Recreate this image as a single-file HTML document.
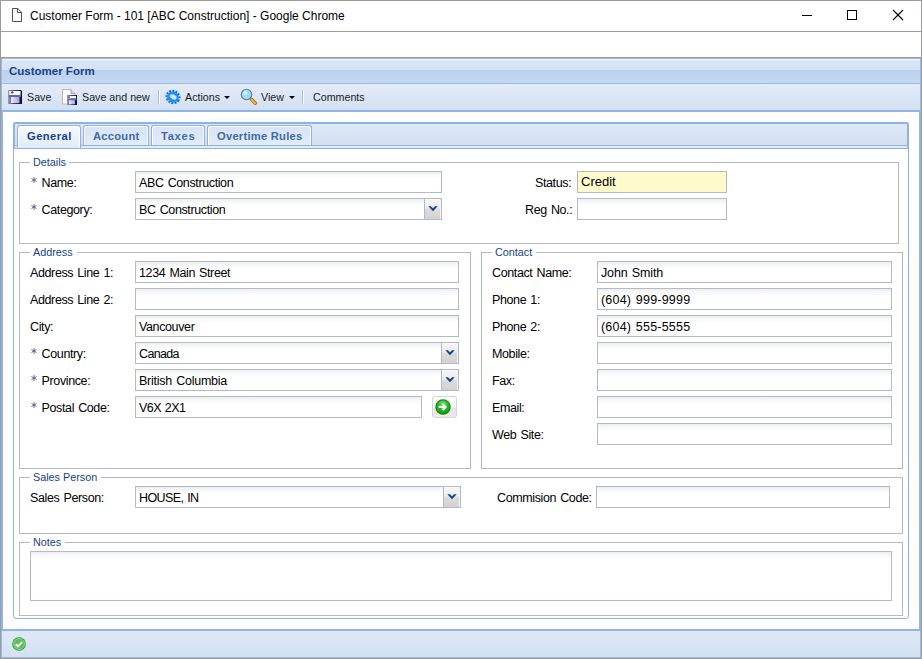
<!DOCTYPE html>
<html><head><meta charset="utf-8">
<style>
*{box-sizing:border-box;margin:0;padding:0}
html,body{width:922px;height:659px;overflow:hidden;background:#fff;font-family:"Liberation Sans",sans-serif;color:#000}
.a{position:absolute}
.t{position:absolute;white-space:pre;line-height:1}
#frame{left:0;top:0;width:922px;height:659px;border:1px solid #9d9a97}
#titlebar{left:1px;top:1px;width:920px;height:31px;background:#fff;border-bottom:1px solid #9c9c9c}
#addr{left:1px;top:32px;width:920px;height:26px;background:#fff;border-bottom:1px solid #9c9c9c}
#hdr{left:1px;top:58px;width:920px;height:26px;border:1px solid #99bbe8;border-bottom:0;background:linear-gradient(#f5f9fe 0,#f5f9fe 1px,#dae7f6 1px,#d3e2f4 11px,#b8ceee 11px,#bdd2ef 12px,#c4d8f1 24px)}
#tb{left:1px;top:83px;width:920px;height:27px;border:1px solid #99bbe8;border-bottom:0;background:linear-gradient(#e4ecf8,#d2e0f1)}
#body{left:1px;top:110px;width:920px;height:521px;border:2px solid #8fb5e6;background:#fff}
#sb{left:1px;top:631px;width:920px;height:27px;border:1px solid #99bbe8;border-top:0;background:linear-gradient(#dfe8f5,#d3e1f1)}
.lbl{font-size:12.5px;letter-spacing:-0.38px;word-spacing:1px;color:#000}
.ast{display:inline-block;width:11.6px;height:1px;position:relative}
.ast svg{position:absolute;left:0.5px;top:-9px}
.val{font-size:12.5px;letter-spacing:-0.38px;word-spacing:1px;color:#000}
.leg{font-size:10.8px;color:#15428b}
.fs{position:absolute;border:1px solid #b5b8c8}
.legbg{position:absolute;background:#fff;height:4px}
.inp{position:absolute;height:22px;border:1px solid #b5b8c8;background:linear-gradient(#eef0f0 0,#f6f7f7 3px,#fff 7px)}
.trig{position:absolute;width:18px;height:22px;border:1px solid #b5b8c8;border-top-right-radius:2px;background:linear-gradient(#f6f6f6 0,#ececec 45%,#dcdcdc 50%,#d2d2d2 100%);box-shadow:inset -1px 0 0 #f4f4f4,inset 0 1px 0 #fafafa}
.trig svg{position:absolute;left:2.5px;top:7px}
.tbt{font-size:10.7px;color:#1a1a1a}
.sep{position:absolute;width:2px;height:14px;border-left:1px solid #98c0f4;border-right:1px solid #fff;top:90px}
.tab{position:absolute;top:125px;height:20px;border:1px solid #8db2e3;border-bottom:0;border-radius:3px 3px 0 0;background:linear-gradient(#d7e4f6,#e1ecfa);box-shadow:inset 1px 1px 0 #fff,inset -1px 0 0 #fff}
.tab.act{background:linear-gradient(#f7fafe,#e0eaf8);height:23px;box-shadow:inset 1px 1px 0 #fff,inset -1px 0 0 #fff}
.tabt{font-weight:bold;color:#416aa3}
</style></head><body>
<div id="frame" class="a"></div>
<div id="titlebar" class="a"></div>
<!-- doc icon -->
<svg class="a" style="left:12px;top:8px" width="10" height="14" viewBox="0 0 10 14"><path d="M0.5 0.5h5.3l3.7 3.7v9.3h-9z M5.5 0.5v4h4" fill="none" stroke="#505050" stroke-width="1"/></svg>
<div class="t" style="left:30px;top:10px;font-size:12px;color:#000">Customer Form - 101 [ABC Construction] - Google Chrome</div>
<!-- window controls -->
<div class="a" style="left:802px;top:15px;width:10px;height:1px;background:#000"></div>
<div class="a" style="left:847px;top:10px;width:10px;height:10px;border:1px solid #000"></div>
<svg class="a" style="left:892px;top:9px" width="12" height="12" viewBox="0 0 12 12"><path d="M1 1L11 11M11 1L1 11" stroke="#000" stroke-width="1.1"/></svg>
<div id="addr" class="a"></div>

<div id="hdr" class="a"></div>
<div class="t" style="left:9px;top:66px;font-size:11.5px;font-weight:bold;color:#15428b">Customer Form</div>
<div id="tb" class="a"></div>
<div id="body" class="a"></div>
<div id="sb" class="a"></div>

<!-- toolbar items -->
<svg class="a" style="left:8px;top:90px" width="14" height="14" viewBox="0 0 14 14"><defs><linearGradient id="fr" x1="0" y1="0" x2="1" y2="0"><stop offset="0" stop-color="#9a9ac4"/><stop offset="0.5" stop-color="#3a3a78"/><stop offset="1" stop-color="#0a0a34"/></linearGradient><linearGradient id="fl" x1="0" y1="0" x2="1" y2="0"><stop offset="0" stop-color="#eeeaf8"/><stop offset="1" stop-color="#a6a2cc"/></linearGradient></defs><path d="M0 0h13l1 1v13H0z" fill="url(#fr)"/><rect x="1.2" y="1" width="11.3" height="4" fill="#fafbff"/><rect x="1" y="5" width="12" height="2" fill="#5a6c9c"/><rect x="3" y="7" width="8.5" height="6" fill="url(#fl)"/><circle cx="4.3" cy="2.4" r="1.2" fill="#34508a"/></svg>
<div class="t tbt" style="left:27px;top:92px">Save</div>
<svg class="a" style="left:62px;top:89px" width="16" height="16" viewBox="0 0 16 16"><path d="M0.5 0.5h8.5l4 4v10.5h-12.5z" fill="#fff" stroke="#b8b8b8"/><path d="M9 0.5v4h4" fill="#d8d8d8" stroke="#a0a0a0"/><path d="M5 6h10v10H5z" fill="url(#fr)"/><rect x="6" y="7" width="8" height="2.6" fill="#f6f7ff"/><rect x="6" y="9.6" width="8.5" height="1.6" fill="#5a6c9c"/><rect x="7" y="11.2" width="6" height="4" fill="url(#fl)"/><circle cx="7" cy="8" r="0.9" fill="#34508a"/></svg>
<div class="t tbt" style="left:82px;top:92px">Save and new</div>
<div class="sep" style="left:158px"></div>
<svg class="a" style="left:165px;top:89px" width="16" height="16" viewBox="0 0 16 16"><g transform="rotate(30 8 8)"><ellipse cx="8" cy="8" rx="6.6" ry="6.1" fill="none" stroke="#1470e0" stroke-width="2" stroke-dasharray="1.9 1.3"/><ellipse cx="8" cy="8" rx="6" ry="5.5" fill="#1a84f0"/><ellipse cx="8" cy="8" rx="4.8" ry="4.3" fill="none" stroke="#30a8f8" stroke-width="0.8" opacity="0.6"/><ellipse cx="8.2" cy="7.8" rx="3.8" ry="2.4" fill="#d8e6f6" stroke="#48bcfa" stroke-width="0.7"/></g></svg>
<div class="t tbt" style="left:185px;top:92px">Actions</div>
<svg class="a" style="left:224px;top:96px" width="6" height="4" viewBox="0 0 6 4"><path d="M0 0h6L3 3z" fill="#000"/></svg>
<svg class="a" style="left:240px;top:88px" width="17" height="17" viewBox="0 0 17 17"><path d="M11.3 11.3l4 4" stroke="#a86a10" stroke-width="3.4" stroke-linecap="round"/><path d="M11.3 11.3l4 4" stroke="#f0b84a" stroke-width="1.8" stroke-linecap="round"/><circle cx="6.5" cy="6.5" r="5.2" fill="#9edcf8" stroke="#5f7898" stroke-width="1.1"/><circle cx="5" cy="5" r="2" fill="#d8f4ff"/></svg>
<div class="t tbt" style="left:261px;top:92px">View</div>
<svg class="a" style="left:289px;top:96px" width="6" height="4" viewBox="0 0 6 4"><path d="M0 0h6L3 3z" fill="#000"/></svg>
<div class="sep" style="left:302px"></div>
<div class="t tbt" style="left:313px;top:92px">Comments</div>


<!-- tab panel -->
<div class="a" style="left:13px;top:122px;width:896px;height:497px;border:1px solid #8db2e3;border-radius:3px;background:#fff"></div>
<div class="a" style="left:13px;top:122px;width:896px;height:27px;border:2px solid #8db2e3;border-bottom:0;border-radius:3px 3px 0 0;background:linear-gradient(#dfe8f5,#d2dff0)"></div>
<div class="a" style="left:15px;top:145px;width:892px;height:1px;background:#8db2e3"></div>
<div class="a" style="left:15px;top:146px;width:892px;height:2px;background:#e2ebf8"></div>
<div class="a" style="left:14px;top:148px;width:894px;height:1px;background:#8db2e3"></div>
<!-- tabs -->
<div class="tab act" style="left:17px;width:64px"></div>
<div class="t tabt" style="left:27px;top:131px;color:#15428b;font-size:11.2px;letter-spacing:0.43px">General</div>
<div class="tab" style="left:83px;width:66px"></div>
<div class="t tabt" style="left:93px;top:131px;font-size:11.2px;letter-spacing:0.24px">Account</div>
<div class="tab" style="left:151px;width:54px"></div>
<div class="t tabt" style="left:161px;top:131px;font-size:11.2px;letter-spacing:0.7px">Taxes</div>
<div class="tab" style="left:207px;width:105px"></div>
<div class="t tabt" style="left:217px;top:131px;font-size:11.2px;letter-spacing:0.24px">Overtime Rules</div>

<!-- Details fieldset -->
<div class="fs" style="left:19px;top:162px;width:880px;height:82px"></div>
<div class="legbg" style="left:30px;top:160px;width:39px"></div>
<div class="t leg" style="left:33px;top:158px;margin-top:-0.6px">Details</div>
<div class="t lbl" style="left:30px;top:177px"><span class="ast"><svg width="6" height="6" viewBox="0 0 6 6"><path d="M3 0v6M0.4 1.5l5.2 3M0.4 4.5l5.2-3" stroke="#4a4a70" stroke-width="0.8"/></svg></span>Name:</div>
<div class="inp" style="left:135px;top:171px;width:307px"></div>
<div class="t val" style="left:139px;top:177px">ABC Construction</div>
<div class="t lbl" style="left:30px;top:204px"><span class="ast"><svg width="6" height="6" viewBox="0 0 6 6"><path d="M3 0v6M0.4 1.5l5.2 3M0.4 4.5l5.2-3" stroke="#4a4a70" stroke-width="0.8"/></svg></span>Category:</div>
<div class="inp" style="left:135px;top:198px;width:307px"></div>
<div class="trig" style="left:424px;top:198px"><svg width="10" height="6" viewBox="0 0 10 6"><path d="M0.3 0.3h2.6L5 2.3l2.1-2h2.6L5 5.2z" fill="#15428b"/></svg></div>
<div class="t val" style="left:139px;top:204px">BC Construction</div>
<div class="t lbl" style="left:535px;top:177px">Status:</div>
<div class="inp" style="left:577px;top:171px;width:150px;background:#fffacb"></div>
<div class="t" style="left:581px;top:175px;font-size:13px">Credit</div>
<div class="t lbl" style="left:525px;top:204px">Reg No.:</div>
<div class="inp" style="left:577px;top:198px;width:150px"></div>

<!-- Address fieldset -->
<div class="fs" style="left:19px;top:252px;width:452px;height:217px"></div>
<div class="legbg" style="left:30px;top:250px;width:47px"></div>
<div class="t leg" style="left:33px;top:248px;margin-top:-0.6px">Address</div>
<div class="t lbl" style="left:30px;top:267px">Address Line 1:</div>
<div class="inp" style="left:135px;top:261px;width:324px"></div>
<div class="t val" style="left:139px;top:267px">1234 Main Street</div>
<div class="t lbl" style="left:30px;top:294px">Address Line 2:</div>
<div class="inp" style="left:135px;top:288px;width:324px"></div>
<div class="t lbl" style="left:30px;top:321px">City:</div>
<div class="inp" style="left:135px;top:315px;width:324px"></div>
<div class="t val" style="left:139px;top:321px">Vancouver</div>
<div class="t lbl" style="left:30px;top:348px"><span class="ast"><svg width="6" height="6" viewBox="0 0 6 6"><path d="M3 0v6M0.4 1.5l5.2 3M0.4 4.5l5.2-3" stroke="#4a4a70" stroke-width="0.8"/></svg></span>Country:</div>
<div class="inp" style="left:135px;top:342px;width:324px"></div>
<div class="trig" style="left:441px;top:342px"><svg width="10" height="6" viewBox="0 0 10 6"><path d="M0.3 0.3h2.6L5 2.3l2.1-2h2.6L5 5.2z" fill="#15428b"/></svg></div>
<div class="t val" style="left:139px;top:348px;letter-spacing:-0.65px">Canada</div>
<div class="t lbl" style="left:30px;top:375px"><span class="ast"><svg width="6" height="6" viewBox="0 0 6 6"><path d="M3 0v6M0.4 1.5l5.2 3M0.4 4.5l5.2-3" stroke="#4a4a70" stroke-width="0.8"/></svg></span>Province:</div>
<div class="inp" style="left:135px;top:369px;width:324px"></div>
<div class="trig" style="left:441px;top:369px"><svg width="10" height="6" viewBox="0 0 10 6"><path d="M0.3 0.3h2.6L5 2.3l2.1-2h2.6L5 5.2z" fill="#15428b"/></svg></div>
<div class="t val" style="left:139px;top:375px;letter-spacing:-0.25px">British Columbia</div>
<div class="t lbl" style="left:30px;top:402px"><span class="ast"><svg width="6" height="6" viewBox="0 0 6 6"><path d="M3 0v6M0.4 1.5l5.2 3M0.4 4.5l5.2-3" stroke="#4a4a70" stroke-width="0.8"/></svg></span>Postal Code:</div>
<div class="inp" style="left:135px;top:396px;width:287px"></div>
<div class="t val" style="left:139px;top:402px;letter-spacing:-0.58px">V6X 2X1</div>
<div class="a" style="left:432px;top:396px;width:25px;height:22px;border:1px solid #d4d4d4;border-radius:3px;background:linear-gradient(#fdfdfd,#f2f2f2 55%,#e4e4e4 56%,#ececec)"></div>
<svg class="a" style="left:435px;top:399px" width="16" height="16" viewBox="0 0 16 16"><defs><radialGradient id="gg" cx="0.5" cy="0.3" r="0.7"><stop offset="0" stop-color="#7ee07e"/><stop offset="0.6" stop-color="#22b422"/><stop offset="1" stop-color="#129a12"/></radialGradient></defs><circle cx="8" cy="8" r="7.7" fill="#0b800b"/><circle cx="8" cy="8" r="6.8" fill="url(#gg)"/><path d="M3.6 8h6.8M7.6 5l3 3-3 3" fill="none" stroke="#fff" stroke-width="2"/></svg>

<!-- Contact fieldset -->
<div class="fs" style="left:481px;top:252px;width:422px;height:217px"></div>
<div class="legbg" style="left:492px;top:250px;width:44px"></div>
<div class="t leg" style="left:495px;top:248px;margin-top:-0.6px">Contact</div>
<div class="t lbl" style="left:492px;top:267px">Contact Name:</div>
<div class="inp" style="left:597px;top:261px;width:295px"></div>
<div class="t val" style="left:601px;top:267px;letter-spacing:-0.15px">John Smith</div>
<div class="t lbl" style="left:492px;top:294px">Phone 1:</div>
<div class="inp" style="left:597px;top:288px;width:295px"></div>
<div class="t val" style="left:601px;top:294px;letter-spacing:0.2px">(604) 999-9999</div>
<div class="t lbl" style="left:492px;top:321px">Phone 2:</div>
<div class="inp" style="left:597px;top:315px;width:295px"></div>
<div class="t val" style="left:601px;top:321px;letter-spacing:0.2px">(604) 555-5555</div>
<div class="t lbl" style="left:492px;top:348px">Mobile:</div>
<div class="inp" style="left:597px;top:342px;width:295px"></div>
<div class="t lbl" style="left:492px;top:375px">Fax:</div>
<div class="inp" style="left:597px;top:369px;width:295px"></div>
<div class="t lbl" style="left:492px;top:402px">Email:</div>
<div class="inp" style="left:597px;top:396px;width:295px"></div>
<div class="t lbl" style="left:492px;top:429px">Web Site:</div>
<div class="inp" style="left:597px;top:423px;width:295px"></div>

<!-- Sales person -->
<div class="fs" style="left:19px;top:477px;width:884px;height:57px"></div>
<div class="legbg" style="left:30px;top:475px;width:71px"></div>
<div class="t leg" style="left:33px;top:473px;margin-top:-0.6px">Sales Person</div>
<div class="t lbl" style="left:30px;top:492px">Sales Person:</div>
<div class="inp" style="left:135px;top:486px;width:326px"></div>
<div class="trig" style="left:443px;top:486px"><svg width="10" height="6" viewBox="0 0 10 6"><path d="M0.3 0.3h2.6L5 2.3l2.1-2h2.6L5 5.2z" fill="#15428b"/></svg></div>
<div class="t val" style="left:139px;top:492px;letter-spacing:-0.6px">HOUSE, IN</div>
<div class="t lbl" style="left:497px;top:492px">Commision Code:</div>
<div class="inp" style="left:596px;top:486px;width:294px"></div>

<!-- Notes -->
<div class="fs" style="left:19px;top:542px;width:884px;height:74px"></div>
<div class="legbg" style="left:30px;top:540px;width:35px"></div>
<div class="t leg" style="left:33px;top:538px;margin-top:-0.6px">Notes</div>
<div class="inp" style="left:30px;top:551px;width:862px;height:50px"></div>

<!-- status icon -->
<svg class="a" style="left:12px;top:637px" width="14" height="14" viewBox="0 0 14 14"><circle cx="7" cy="7" r="6.8" fill="#239a23"/><circle cx="7" cy="7" r="5.5" fill="#5cbf5c" stroke="#b8e8b8" stroke-width="0.7"/><path d="M3.8 7.3l2.1 2 4.2-4.2" fill="none" stroke="#fff" stroke-width="1.9"/></svg>

</body></html>
